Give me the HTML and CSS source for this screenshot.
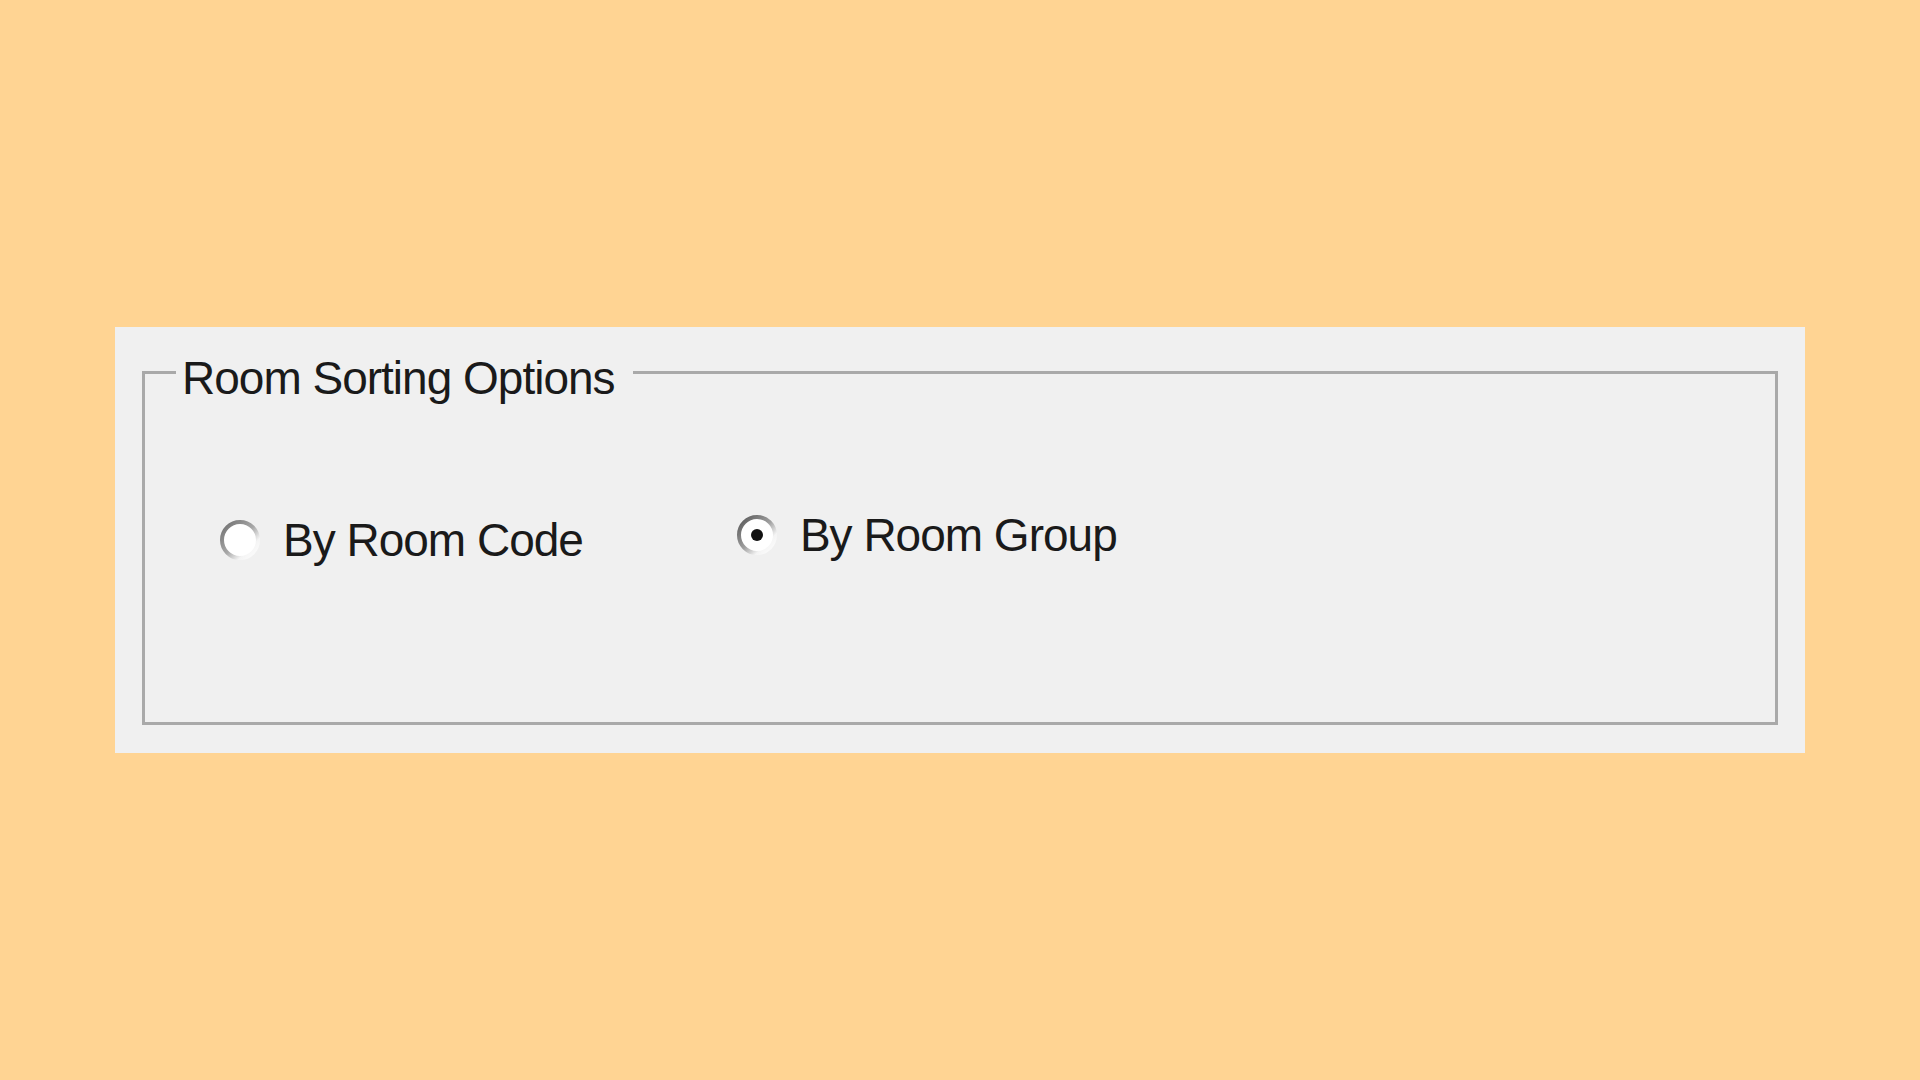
FILE: index.html
```html
<!DOCTYPE html>
<html lang="en">
<head>
<meta charset="utf-8">
<title>Room Sorting Options</title>
<link rel="stylesheet" href="styles.css">
</head>
<body>
<div class="stage">
  <div class="panel">
    <fieldset class="group">
      <legend class="group-title">Room Sorting Options</legend>
      <div class="options">
        <label class="option">
          <svg class="radio" viewBox="0 0 42 42" width="42" height="42">
            <defs>
              <linearGradient id="ring1" x1="0" y1="0" x2="1" y2="1">
                <stop offset="0" stop-color="#6e6e6e"/>
                <stop offset="0.5" stop-color="#a8a8a8"/>
                <stop offset="0.75" stop-color="#f4f4f4"/>
                <stop offset="1" stop-color="#ffffff"/>
              </linearGradient>
            </defs>
            <circle cx="21" cy="21" r="18" fill="#ffffff" stroke="url(#ring1)" stroke-width="4"/>
          </svg>
          <span class="option-text">By Room Code</span>
        </label>
        <label class="option option-raised">
          <svg class="radio" viewBox="0 0 42 42" width="42" height="42">
            <defs>
              <linearGradient id="ring2" x1="0" y1="0" x2="1" y2="1">
                <stop offset="0" stop-color="#555555"/>
                <stop offset="0.5" stop-color="#a0a0a0"/>
                <stop offset="0.75" stop-color="#f4f4f4"/>
                <stop offset="1" stop-color="#ffffff"/>
              </linearGradient>
            </defs>
            <circle cx="21" cy="21" r="18" fill="#ffffff" stroke="url(#ring2)" stroke-width="4"/>
            <circle cx="21" cy="21" r="6" fill="#111111"/>
          </svg>
          <span class="option-text">By Room Group</span>
        </label>
      </div>
    </fieldset>
  </div>
</div>
</body>
</html>
```
FILE: styles.css
```css
html, body {
  margin: 0;
  padding: 0;
}
body {
  background: #ffd493;
  width: 1920px;
  height: 1080px;
  font-family: "Liberation Sans", Arial, sans-serif;
  color: #1a1a1a;
}
.stage {
  padding: 327px 0 0 115px;
}
.panel {
  width: 1690px;
  height: 426px;
  box-sizing: border-box;
  background: #f0f0f0;
  padding: 13px 27px 28px 27px;
}
.group {
  margin: 0;
  padding: 0;
  height: 100%;
  box-sizing: border-box;
  border: 3px solid #a9a9a9;
  min-width: 0;
}
.group-title {
  margin-left: 31px;
  padding: 11px 18px 0 6px;
  font-size: 46px;
  line-height: 54px;
  letter-spacing: -1px;
}
.options {
  display: flex;
  align-items: flex-start;
  gap: 153px;
  padding: 113px 0 0 74px;
}
.option {
  display: flex;
  align-items: center;
  gap: 22px;
}
.option-raised {
  margin-top: -5px;
}
.radio {
  display: block;
  flex: none;
}
.option-text {
  font-size: 46px;
  line-height: 44px;
  letter-spacing: -1px;
}
```
